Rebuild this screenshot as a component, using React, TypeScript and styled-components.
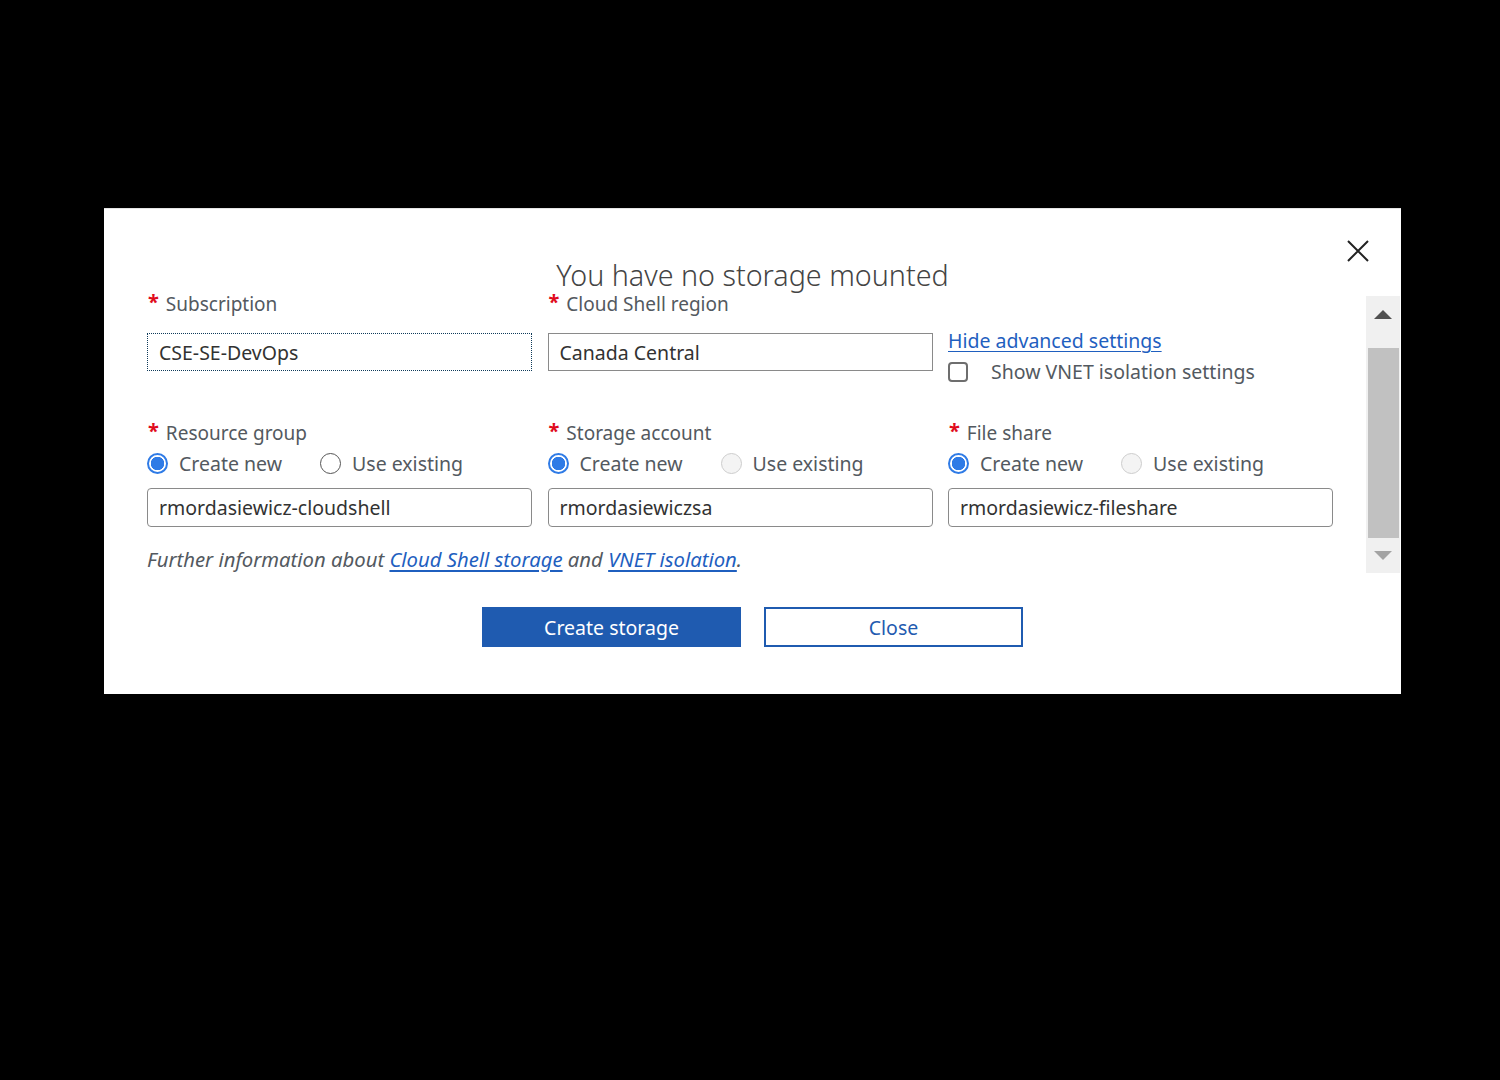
import React from "react";
import styled, { createGlobalStyle } from "styled-components";

const Global = createGlobalStyle`
  html, body { margin: 0; padding: 0; background: #000; }
  body { font-family: "Noto Sans", "Open Sans", sans-serif; }
  * { box-sizing: border-box; }
`;

const Backdrop = styled.div`
  min-height: 1080px;
  background: #000;
  padding: 208px 0 0 104px;
`;

const Dialog = styled.div`
  position: relative;
  width: 1297px;
  height: 486px;
  background: #fff;
  border-top: 1px solid #e4e4e4;
  display: flex;
  flex-direction: column;
`;

const Header = styled.div`
  height: 79px;
  padding-top: 48px;
  text-align: center;
`;

const Title = styled.h1`
  margin: 0;
  font-family: "Noto Sans", "Open Sans", sans-serif;
  font-weight: 300;
  font-size: 28.7px;
  line-height: 36px;
  color: #444;
`;

const CloseX = styled.button`
  position: absolute;
  top: 31px;
  right: 32px;
  width: 22px;
  height: 22px;
  padding: 0;
  border: 0;
  background: transparent;
  display: flex;
  cursor: pointer;
`;

const Body = styled.div`
  display: flex;
  align-items: flex-start;
`;

const ScrollArea = styled.div`
  flex: 1;
  height: 285px;
  overflow: hidden;
  padding: 4px 0 0 43px;
`;

const Grid = styled.div`
  display: grid;
  grid-template-columns: repeat(3, 385px);
  column-gap: 15.5px;
  align-items: start;
`;

const Cell = styled.div<{ $row: 1 | 2; $pad?: number }>`
  display: flex;
  flex-direction: column;
  margin-top: ${(p) => (p.$row === 2 ? "38px" : "0")};
  padding-top: ${(p) => p.$pad ?? 0}px;
`;

const Label = styled.div`
  display: flex;
  align-items: center;
  gap: 7px;
  height: 24px;
  font-size: 19px;
  color: #535960;
  white-space: nowrap;
`;

const Star = styled.span`
  color: #e00b1c;
  font-size: 20px;
  font-weight: 700;
  line-height: 20px;
  height: 20px;
  padding-left: 1px;
  align-self: flex-start;
`;

const TextBox = styled.div<{ $focused?: boolean; $rounded?: boolean; $top: number; $h: number }>`
  margin-top: ${(p) => p.$top}px;
  height: ${(p) => p.$h}px;
  border: 1px ${(p) => (p.$focused ? "dotted #0f3a5a" : "solid #8a8a8a")};
  border-radius: ${(p) => (p.$rounded ? "4px" : "0")};
  padding: 0 11px;
  display: flex;
  align-items: center;
  font-size: 19.5px;
  color: #323232;
  white-space: nowrap;
`;

const Link = styled.a`
  font-size: 19.5px;
  line-height: 24px;
  color: #1f5fbf;
  text-decoration: underline;
  text-underline-offset: 3px;
  text-decoration-thickness: 1px;
  white-space: nowrap;
`;

const CheckRow = styled.div`
  margin-top: 6px;
  height: 24px;
  display: flex;
  align-items: center;
  gap: 23px;
  font-size: 19.5px;
  color: #535960;
  white-space: nowrap;
`;

const CheckBox = styled.span`
  width: 20px;
  height: 20px;
  border: 2px solid #6e6e6e;
  border-radius: 4px;
  margin-top: 2px;
  flex: none;
`;

const RadioRow = styled.div`
  margin-top: 4px;
  height: 29px;
  display: flex;
  align-items: center;
  gap: 38px;
`;

const RadioOption = styled.label`
  display: flex;
  align-items: center;
  gap: 11px;
  font-size: 19.5px;
  color: #535960;
  white-space: nowrap;
`;

const RadioDot = styled.span<{ $state: "on" | "off" | "disabled" }>`
  width: 21px;
  height: 21px;
  border-radius: 50%;
  flex: none;
  border: ${(p) =>
    p.$state === "on"
      ? "2px solid #2f7be6"
      : p.$state === "off"
      ? "1.5px solid #555"
      : "1.5px solid #cdcdcd"};
  background: ${(p) =>
    p.$state === "on"
      ? "radial-gradient(circle, #2f7be6 0 6.5px, #fff 7px)"
      : p.$state === "disabled"
      ? "#f4f4f4"
      : "#fff"};
`;

const Note = styled.p`
  grid-column: 1 / -1;
  margin: 19px 0 0;
  height: 26px;
  line-height: 26px;
  font-size: 20.3px;
  font-style: italic;
  color: #535960;
  white-space: nowrap;
  a {
    color: #1f5fbf;
    text-decoration: underline;
    text-underline-offset: 3px;
  }
`;

const Scrollbar = styled.div`
  width: 34px;
  height: 277px;
  margin-top: 8px;
  margin-right: 1px;
  background: #f0f0f0;
  display: flex;
  flex-direction: column;
  align-items: center;
`;

const Arrow = styled.span<{ $down?: boolean }>`
  width: 0;
  height: 0;
  border-left: 9px solid transparent;
  border-right: 9px solid transparent;
  ${(p) =>
    p.$down
      ? "border-top: 9px solid #a3a3a3; margin-top: 13px;"
      : "border-bottom: 9px solid #505050; margin-top: 14px;"}
`;

const Thumb = styled.div`
  width: 31px;
  height: 190px;
  margin-top: 29px;
  margin-left: 1px;
  background: #c1c1c1;
`;

const Footer = styled.div`
  margin-top: 34px;
  display: flex;
  justify-content: center;
  gap: 23px;
`;

const Button = styled.button<{ $primary?: boolean }>`
  width: 259px;
  height: 40px;
  font-family: "Noto Sans", "Open Sans", sans-serif;
  font-size: 19.5px;
  cursor: pointer;
  border: 2px solid #1f5bb0;
  background: ${(p) => (p.$primary ? "#1f5bb0" : "#fff")};
  color: ${(p) => (p.$primary ? "#fff" : "#1f5bb0")};
`;

type Field = { label: string; value: string; existing: "off" | "disabled" };

const row2: Field[] = [
  { label: "Resource group", value: "rmordasiewicz-cloudshell", existing: "off" },
  { label: "Storage account", value: "rmordasiewiczsa", existing: "disabled" },
  { label: "File share", value: "rmordasiewicz-fileshare", existing: "disabled" },
];

const Req = ({ children }: { children: React.ReactNode }) => (
  <Label>
    <Star>*</Star>
    {children}
  </Label>
);

export default function App() {
  return (
    <>
      <Global />
      <Backdrop>
        <Dialog>
          <Header>
            <Title>You have no storage mounted</Title>
          </Header>
          <CloseX aria-label="Close">
            <svg width="22" height="22" viewBox="0 0 22 22">
              <path d="M1 1 L21 21 M21 1 L1 21" stroke="#222" strokeWidth="2" />
            </svg>
          </CloseX>
          <Body>
            <ScrollArea>
              <Grid>
                <Cell $row={1}>
                  <Req>Subscription</Req>
                  <TextBox $focused $top={17} $h={38}>CSE-SE-DevOps</TextBox>
                </Cell>
                <Cell $row={1}>
                  <Req>Cloud Shell region</Req>
                  <TextBox $top={17} $h={38}>Canada Central</TextBox>
                </Cell>
                <Cell $row={1} $pad={37}>
                  <Link href="#">Hide advanced settings</Link>
                  <CheckRow>
                    <CheckBox />
                    Show VNET isolation settings
                  </CheckRow>
                </Cell>
                {row2.map((f) => (
                  <Cell $row={2} key={f.label}>
                    <Req>{f.label}</Req>
                    <RadioRow>
                      <RadioOption>
                        <RadioDot $state="on" />
                        Create new
                      </RadioOption>
                      <RadioOption>
                        <RadioDot $state={f.existing} />
                        Use existing
                      </RadioOption>
                    </RadioRow>
                    <TextBox $rounded $top={10} $h={39}>{f.value}</TextBox>
                  </Cell>
                ))}
                <Note>
                  Further information about <a href="#">Cloud Shell storage</a> and{" "}
                  <a href="#">VNET isolation</a>.
                </Note>
              </Grid>
            </ScrollArea>
            <Scrollbar>
              <Arrow />
              <Thumb />
              <Arrow $down />
            </Scrollbar>
          </Body>
          <Footer>
            <Button $primary>Create storage</Button>
            <Button>Close</Button>
          </Footer>
        </Dialog>
      </Backdrop>
    </>
  );
}
